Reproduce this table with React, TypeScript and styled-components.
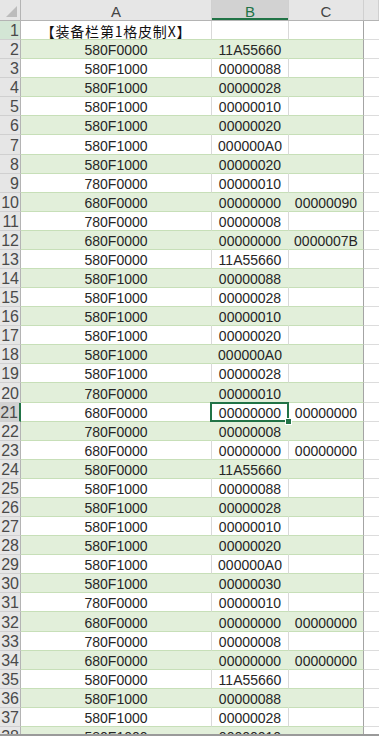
import styled, { createGlobalStyle, css } from "styled-components";

const GlobalStyle = createGlobalStyle`
  html, body {
    margin: 0;
    padding: 0;
    background: #ffffff;
    overflow: hidden;
  }
  body {
    font-family: "Liberation Sans", "Noto Sans CJK SC", sans-serif;
  }
`;

const COLS = "21px 191px 77px 75px 15px";
const ROW_H = "19.08px";

const Sheet = styled.div`
  width: 379px;
  height: 736px;
  overflow: hidden;
  display: flex;
  flex-direction: column;
  position: relative;
  border-bottom: 2px solid #9a9a9a;
  box-sizing: border-box;
`;

const HeaderRow = styled.div`
  display: grid;
  grid-template-columns: ${COLS};
  height: 21px;
  flex: none;
  background: #e6e6e6;
  border-bottom: 1px solid #b4b4b4;
  box-sizing: border-box;
`;

const Corner = styled.div`
  position: relative;
  border-right: 1px solid #b4b4b4;

  &::after {
    content: "";
    position: absolute;
    right: 3px;
    bottom: 3px;
    border-style: solid;
    border-width: 0 0 11px 11px;
    border-color: transparent transparent #bcbcbc transparent;
  }
`;

const ColHead = styled.div<{ $selected?: boolean }>`
  display: flex;
  align-items: flex-end;
  justify-content: center;
  padding-bottom: 1px;
  font-size: 15px;
  line-height: 15px;
  color: #444444;
  border-right: 1px solid #d0d0d0;
  box-sizing: border-box;

  ${(p) =>
    p.$selected &&
    css`
      background: #d2d2d2;
      color: #217346;
      box-shadow: inset 0 -2px 0 #217346;
    `}
`;

const Row = styled.div`
  display: grid;
  grid-template-columns: ${COLS};
  height: ${ROW_H};
  flex: none;
`;

const RowHead = styled.div<{ $active?: boolean; $marked?: boolean }>`
  display: flex;
  align-items: flex-end;
  justify-content: flex-end;
  overflow: hidden;
  padding-right: 1px;
  font-size: 16px;
  line-height: 16px;
  color: #4a4a4a;
  background: #e6e6e6;
  border-right: 1px solid #b4b4b4;
  border-bottom: 1px solid #d0d0d0;
  box-sizing: border-box;
  white-space: nowrap;

  ${(p) =>
    p.$marked &&
    css`
      background: #d3e6d5;
    `}

  ${(p) =>
    p.$active &&
    css`
      border-right: 2px solid #217346;
      background: #d2d2d2;
    `}
`;

const Cell = styled.div<{ $band?: boolean; $last?: boolean; $selected?: boolean }>`
  position: relative;
  display: flex;
  align-items: flex-end;
  justify-content: center;
  white-space: nowrap;
  font-size: 14px;
  line-height: 14px;
  padding-bottom: 1px;
  color: #262626;
  background: ${(p) => (p.$band ? "#e2efda" : "#ffffff")};
  border-bottom: 1px solid #c7dfb8;
  border-right: 1px solid ${(p) => (p.$last ? "#a4a4a4" : p.$band ? "#e2efda" : "#d9d9d9")};
  box-sizing: border-box;

  ${(p) =>
    p.$selected &&
    css`
      &::after {
        content: "";
        position: absolute;
        inset: -1px -1px -1px -2px;
        border: 2px solid #217346;
        z-index: 2;
      }
      &::before {
        content: "";
        position: absolute;
        right: -4px;
        bottom: -4px;
        width: 5px;
        height: 5px;
        background: #217346;
        border: 1px solid #ffffff;
        z-index: 3;
      }
    `}
`;

const Title = styled.span`
  font-family: "Noto Sans CJK SC", "Liberation Sans", sans-serif;
  font-size: 14px;
  line-height: 14px;
  color: #111111;
  letter-spacing: 0.8px;
`;

const Spare = styled.div`
  background: #ffffff;
  border-bottom: 1px solid #dcdcdc;
`;

const data: [string, string, string][] = [
  ["580F0000", "11A55660", ""],
  ["580F1000", "00000088", ""],
  ["580F1000", "00000028", ""],
  ["580F1000", "00000010", ""],
  ["580F1000", "00000020", ""],
  ["580F1000", "000000A0", ""],
  ["580F1000", "00000020", ""],
  ["780F0000", "00000010", ""],
  ["680F0000", "00000000", "00000090"],
  ["780F0000", "00000008", ""],
  ["680F0000", "00000000", "0000007B"],
  ["580F0000", "11A55660", ""],
  ["580F1000", "00000088", ""],
  ["580F1000", "00000028", ""],
  ["580F1000", "00000010", ""],
  ["580F1000", "00000020", ""],
  ["580F1000", "000000A0", ""],
  ["580F1000", "00000028", ""],
  ["780F0000", "00000010", ""],
  ["680F0000", "00000000", "00000000"],
  ["780F0000", "00000008", ""],
  ["680F0000", "00000000", "00000000"],
  ["580F0000", "11A55660", ""],
  ["580F1000", "00000088", ""],
  ["580F1000", "00000028", ""],
  ["580F1000", "00000010", ""],
  ["580F1000", "00000020", ""],
  ["580F1000", "000000A0", ""],
  ["580F1000", "00000030", ""],
  ["780F0000", "00000010", ""],
  ["680F0000", "00000000", "00000000"],
  ["780F0000", "00000008", ""],
  ["680F0000", "00000000", "00000000"],
  ["580F0000", "11A55660", ""],
  ["580F1000", "00000088", ""],
  ["580F1000", "00000028", ""],
  ["580F1000", "00000010", ""],
];

const SELECTED_ROW = 21;

export default function App() {
  return (
    <>
      <GlobalStyle />
      <Sheet>
        <HeaderRow>
          <Corner />
          <ColHead>A</ColHead>
          <ColHead $selected>B</ColHead>
          <ColHead>C</ColHead>
          <ColHead />
        </HeaderRow>

        <Row>
          <RowHead $marked>1</RowHead>
          <Cell>
            <Title>【装备栏第1格皮制X】</Title>
          </Cell>
          <Cell />
          <Cell $last />
          <Spare />
        </Row>

        {data.map(([a, b, c], i) => {
          const n = i + 2;
          const band = n % 2 === 0;
          return (
            <Row key={n}>
              <RowHead $active={n === SELECTED_ROW}>{n}</RowHead>
              <Cell $band={band}>{a}</Cell>
              <Cell $band={band} $selected={n === SELECTED_ROW}>
                {b}
              </Cell>
              <Cell $band={band} $last>
                {c}
              </Cell>
              <Spare />
            </Row>
          );
        })}
      </Sheet>
    </>
  );
}
